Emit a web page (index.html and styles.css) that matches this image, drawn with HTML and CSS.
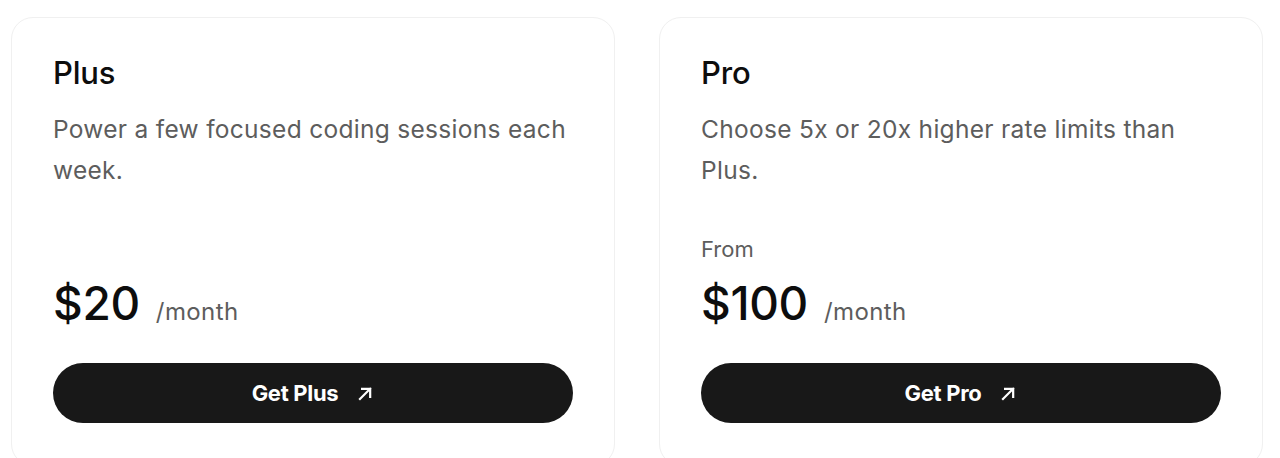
FILE: index.html
```html
<!DOCTYPE html>
<html lang="en">
<head>
<meta charset="utf-8">
<title>Plans</title>
<link rel="stylesheet" href="styles.css">
</head>
<body>
<main class="plans">
  <section class="card">
    <h2 class="card-title">Plus</h2>
    <p class="card-desc">Power a few focused coding sessions each week.</p>
    <div class="card-bottom">
      <div class="price-row">
        <span class="price">$20</span>
        <span class="period">/month</span>
      </div>
      <a class="cta" href="#">
        <span>Get Plus</span>
        <svg class="cta-icon" viewBox="0 0 20 20" width="17" height="17" aria-hidden="true"><path d="M3.5 16.5 L15.5 4.5 M6 4.5 H15.5 V14" fill="none" stroke="currentColor" stroke-width="2.6" stroke-linecap="square"/></svg>
      </a>
    </div>
  </section>
  <section class="card">
    <h2 class="card-title">Pro</h2>
    <p class="card-desc">Choose 5x or 20x higher rate limits than Plus.</p>
    <div class="card-bottom">
      <div class="from">From</div>
      <div class="price-row">
        <span class="price">$100</span>
        <span class="period">/month</span>
      </div>
      <a class="cta" href="#">
        <span>Get Pro</span>
        <svg class="cta-icon" viewBox="0 0 20 20" width="17" height="17" aria-hidden="true"><path d="M3.5 16.5 L15.5 4.5 M6 4.5 H15.5 V14" fill="none" stroke="currentColor" stroke-width="2.6" stroke-linecap="square"/></svg>
      </a>
    </div>
  </section>
</main>
</body>
</html>
```

FILE: styles.css
```css
html, body {
  margin: 0;
  padding: 0;
  background: #ffffff;
}

body {
  font-family: Inter, "Noto Sans", "Liberation Sans", sans-serif;
  color: #0d0d0d;
  overflow: hidden;
}

.plans {
  display: grid;
  grid-template-columns: 604px 604px;
  gap: 44px;
  padding: 17px 0 0 11px;
}

.card {
  display: flex;
  flex-direction: column;
  border: 1px solid #f0f0f0;
  border-radius: 22px;
  padding: 37px 41px 42px 41px;
  background: #ffffff;
}

.card-title {
  margin: 0;
  font-size: 31px;
  line-height: 36px;
  font-weight: 500;
  letter-spacing: -0.2px;
  color: #0d0d0d;
}

.card-desc {
  margin: 18px 0 0 0;
  font-size: 24.5px;
  line-height: 41px;
  font-weight: 400;
  letter-spacing: 0.3px;
  color: #5d5d5d;
  min-height: 82px;
}

.card-bottom {
  margin-top: auto;
  padding-top: 44px;
  display: flex;
  flex-direction: column;
}

.from {
  font-size: 22px;
  line-height: 28px;
  color: #5d5d5d;
  margin-bottom: 15px;
}

.price-row {
  display: flex;
  align-items: baseline;
  gap: 16px;
  height: 50px;
}

.price {
  font-size: 46px;
  line-height: 50px;
  font-weight: 500;
  letter-spacing: -0.3px;
  color: #0d0d0d;
}

.period {
  font-size: 24px;
  letter-spacing: 0.4px;
  color: #5d5d5d;
}

.cta {
  margin-top: 35px;
  height: 60px;
  border-radius: 30px;
  background: #181818;
  color: #ffffff;
  display: flex;
  align-items: center;
  justify-content: center;
  gap: 19px;
  text-decoration: none;
  font-size: 22px;
  font-weight: 700;
  letter-spacing: -0.3px;
}

.cta-icon {
  display: block;
}
```
